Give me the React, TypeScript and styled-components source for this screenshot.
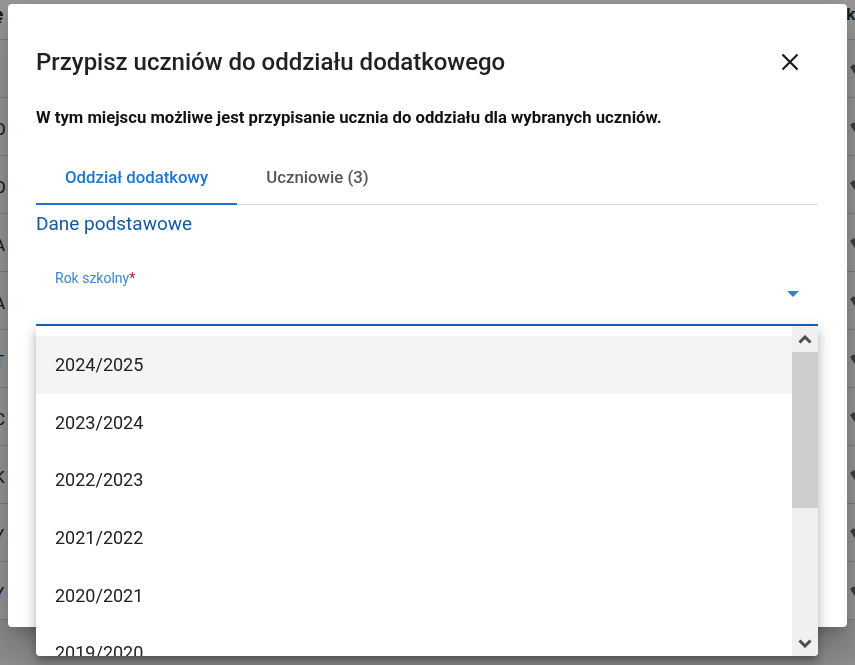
import React, { useState } from "react";
import styled, { createGlobalStyle } from "styled-components";

const GlobalStyle = createGlobalStyle`
  html, body {
    margin: 0;
    padding: 0;
    height: 100%;
    overflow: hidden;
  }
  body {
    font-family: Roboto, "Noto Sans", "Liberation Sans", sans-serif;
    background: #ececec;
  }
`;

// the page behind the dialog, only its edges show
const BackPage = styled.div`
  width: 855px;
  background: #ffffff;
`;

const BackRow = styled.div<{ $head?: boolean }>`
  display: flex;
  justify-content: space-between;
  align-items: ${(p) => (p.$head ? "flex-start" : "center")};
  height: ${(p) => (p.$head ? "40px" : "58px")};
  border-bottom: 1px solid #d6d6d6;
  box-sizing: border-box;
  font-size: 17px;
  font-weight: ${(p) => (p.$head ? 700 : 400)};
  color: #222;
`;

const BackCellLeft = styled.span`
  margin-left: -6px;
  padding-top: 4px;
`;

const BackCellRight = styled.span`
  margin-right: -10px;
  padding-top: 4px;
  display: flex;
  align-items: center;
  color: #333;
`;

const Overlay = styled.div`
  position: fixed;
  inset: 0;
  background: rgba(0, 0, 0, 0.4);
  display: flex;
  align-items: flex-start;
  justify-content: center;
  padding-top: 4px;
`;

const Dialog = styled.div`
  position: relative;
  width: 839px;
  height: 623px;
  background: #fff;
  border-radius: 4px;
  box-shadow: 0 11px 15px -7px rgba(0, 0, 0, 0.2), 0 24px 38px 3px rgba(0, 0, 0, 0.14),
    0 9px 46px 8px rgba(0, 0, 0, 0.12);
  box-sizing: border-box;
  padding: 0 29px 0 28px;
`;

const Header = styled.div`
  display: flex;
  align-items: center;
  justify-content: space-between;
  padding-top: 39px;
  height: 38px;
`;

const Title = styled.h2`
  margin: 0;
  font-size: 24px;
  font-weight: 500;
  color: #212121;
`;

const CloseButton = styled.button`
  border: 0;
  background: none;
  padding: 0;
  width: 24px;
  height: 24px;
  margin-right: 16px;
  display: flex;
  align-items: center;
  justify-content: center;
  cursor: pointer;
`;

const Lead = styled.p`
  margin: 26px 0 0;
  font-size: 16.7px;
  font-weight: 700;
  color: #111;
  line-height: 22px;
`;

const Tabs = styled.div`
  display: flex;
  margin-top: 21px;
  border-bottom: 1px solid #dcdcdc;
`;

const Tab = styled.button<{ $active?: boolean }>`
  border: 0;
  background: none;
  font-family: inherit;
  height: 55px;
  padding: 0 29px;
  font-size: 16.8px;
  font-weight: 500;
  color: ${(p) => (p.$active ? "#1e76d0" : "#555")};
  border-bottom: 2px solid ${(p) => (p.$active ? "#1e76d0" : "transparent")};
  margin-bottom: -1px;
  cursor: pointer;
`;

const SectionTitle = styled.h3`
  margin: 7px 0 0;
  font-size: 19px;
  font-weight: 400;
  color: #135aa0;
  line-height: 24px;
`;

const Field = styled.div`
  position: relative;
  margin-top: 33px;
  height: 55px;
  border-bottom: 2px solid #1565c0;
  display: flex;
  align-items: flex-start;
  justify-content: space-between;
  padding: 0 19px;
`;

const Label = styled.label`
  font-size: 14px;
  color: #3a86d6;
  line-height: 18px;
`;

const Required = styled.span`
  color: #b71c1c;
`;

const Arrow = styled.span`
  margin-top: 22px;
  width: 0;
  height: 0;
  border-left: 6px solid transparent;
  border-right: 6px solid transparent;
  border-top: 6px solid #2f80d8;
`;

const Menu = styled.div`
  position: absolute;
  left: 0;
  top: 57px;
  width: 782px;
  height: 330px;
  background: #fff;
  border-radius: 0 0 4px 4px;
  box-shadow: 0 5px 5px -3px rgba(0, 0, 0, 0.2), 0 8px 10px 1px rgba(0, 0, 0, 0.14),
    0 3px 14px 2px rgba(0, 0, 0, 0.12);
  display: flex;
  overflow: hidden;
  z-index: 2;
`;

const Options = styled.ul`
  flex: 1;
  list-style: none;
  margin: 0;
  padding: 10px 0 0;
  overflow: hidden;
`;

const Option = styled.li<{ $active?: boolean }>`
  height: 57.6px;
  display: flex;
  align-items: center;
  padding-left: 19px;
  font-size: 18px;
  color: #222;
  background: ${(p) => (p.$active ? "#f4f4f4" : "transparent")};
  cursor: pointer;
`;

const ScrollBar = styled.div`
  width: 26px;
  background: #f0f0f0;
  display: flex;
  flex-direction: column;
`;

const ScrollButton = styled.div`
  height: 26px;
  display: flex;
  align-items: center;
  justify-content: center;
`;

const Thumb = styled.div`
  height: 156px;
  background: #cdcdcd;
`;

const Track = styled.div`
  flex: 1;
`;

const years = [
  "2024/2025",
  "2023/2024",
  "2022/2023",
  "2021/2022",
  "2020/2021",
  "2019/2020",
  "2018/2019",
];

const leftLetters = ["", "O", "O", "A", "A", "T", "C", "K", "Y", "Y"];

const RowIcon = () => (
  <svg width="16" height="16" viewBox="0 0 16 16">
    <path d="M1 4 L8 14 L15 4 L11 1 L8 7 L5 1 Z" fill="#666" />
  </svg>
);

export default function App() {
  const [open, setOpen] = useState(true);
  const [active, setActive] = useState(0);

  return (
    <>
      <GlobalStyle />
      <BackPage>
        <BackRow $head>
          <BackCellLeft>ę</BackCellLeft>
          <BackCellRight>ko</BackCellRight>
        </BackRow>
        {leftLetters.map((l, i) => (
          <BackRow key={i}>
            <BackCellLeft>{l}</BackCellLeft>
            <BackCellRight>
              <RowIcon />
            </BackCellRight>
          </BackRow>
        ))}
      </BackPage>
      <Overlay>
        <Dialog>
          <Header>
            <Title>Przypisz uczniów do oddziału dodatkowego</Title>
            <CloseButton aria-label="Zamknij">
              <svg width="18" height="18" viewBox="0 0 18 18">
                <path d="M1.5 1.5 L16.5 16.5 M16.5 1.5 L1.5 16.5" stroke="#1a1a1a" strokeWidth="2.2" />
              </svg>
            </CloseButton>
          </Header>
          <Lead>W tym miejscu możliwe jest przypisanie ucznia do oddziału dla wybranych uczniów.</Lead>
          <Tabs>
            <Tab $active>Oddział dodatkowy</Tab>
            <Tab>Uczniowie (3)</Tab>
          </Tabs>
          <SectionTitle>Dane podstawowe</SectionTitle>
          <Field onClick={() => setOpen(!open)}>
            <Label>
              Rok szkolny<Required>*</Required>
            </Label>
            <Arrow />
            {open && (
              <Menu>
                <Options>
                  {years.map((y, i) => (
                    <Option key={y} $active={i === active} onMouseEnter={() => setActive(i)}>
                      {y}
                    </Option>
                  ))}
                </Options>
                <ScrollBar>
                  <ScrollButton>
                    <svg width="14" height="9" viewBox="0 0 14 9">
                      <path d="M1.5 7.5 L7 2 L12.5 7.5" stroke="#4d4d4d" strokeWidth="3" fill="none" />
                    </svg>
                  </ScrollButton>
                  <Thumb />
                  <Track />
                  <ScrollButton>
                    <svg width="14" height="9" viewBox="0 0 14 9">
                      <path d="M1.5 1.5 L7 7 L12.5 1.5" stroke="#4d4d4d" strokeWidth="3" fill="none" />
                    </svg>
                  </ScrollButton>
                </ScrollBar>
              </Menu>
            )}
          </Field>
        </Dialog>
      </Overlay>
    </>
  );
}
